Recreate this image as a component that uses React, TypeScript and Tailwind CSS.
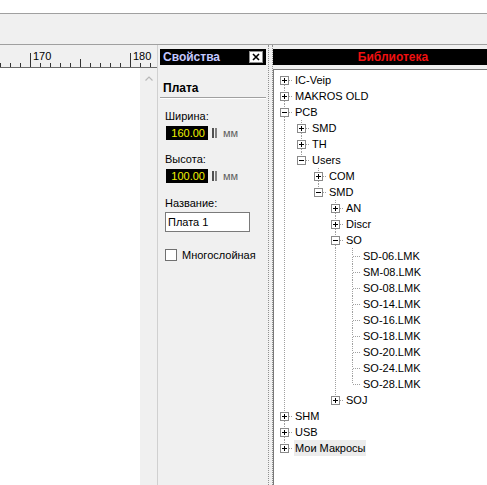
import React from 'react'

type TreeNode = { label: string; exp?: 'plus' | 'minus'; children?: TreeNode[]; selected?: boolean }

const leaves = ['SD-06.LMK', 'SM-08.LMK', 'SO-08.LMK', 'SO-14.LMK', 'SO-16.LMK', 'SO-18.LMK', 'SO-20.LMK', 'SO-24.LMK', 'SO-28.LMK']

const tree: TreeNode[] = [
  { label: 'IC-Veip', exp: 'plus' },
  { label: 'MAKROS OLD', exp: 'plus' },
  {
    label: 'PCB',
    exp: 'minus',
    children: [
      { label: 'SMD', exp: 'plus' },
      { label: 'TH', exp: 'plus' },
      {
        label: 'Users',
        exp: 'minus',
        children: [
          { label: 'COM', exp: 'plus' },
          {
            label: 'SMD',
            exp: 'minus',
            children: [
              { label: 'AN', exp: 'plus' },
              { label: 'Discr', exp: 'plus' },
              { label: 'SO', exp: 'minus', children: leaves.map((l) => ({ label: l })) },
              { label: 'SOJ', exp: 'plus' },
            ],
          },
        ],
      },
    ],
  },
  { label: 'SHM', exp: 'plus' },
  { label: 'USB', exp: 'plus' },
  { label: 'Мои Макросы', exp: 'plus', selected: true },
]

type FlatRow = { node: TreeNode; lines: boolean[]; last: boolean; first: boolean }

function flatten(nodes: TreeNode[], lines: boolean[], out: FlatRow[]) {
  nodes.forEach((n, i) => {
    const last = i === nodes.length - 1
    out.push({ node: n, lines, last, first: lines.length === 0 && i === 0 })
    if (n.children) flatten(n.children, [...lines, !last], out)
  })
  return out
}

const dot = { stroke: '#a0a0a0', strokeWidth: 1, strokeDasharray: '1 1' }

function Cell({ vertical }: { vertical: boolean }) {
  return (
    <svg width="17" height="16" className="shrink-0">
      {vertical && <line x1="8.5" y1="0" x2="8.5" y2="16" {...dot} />}
    </svg>
  )
}

function OwnCell({ row }: { row: FlatRow }) {
  const { node, last, first } = row
  return (
    <svg width="17" height="16" className="shrink-0">
      {!first && <line x1="8.5" y1="0" x2="8.5" y2="8" {...dot} />}
      {!last && <line x1="8.5" y1="9" x2="8.5" y2="16" {...dot} />}
      <line x1="9" y1="8.5" x2="17" y2="8.5" {...dot} />
      {node.exp && (
        <g>
          <rect x="4.5" y="4.5" width="8" height="8" fill="#fff" stroke="#8a8a8a" />
          <line x1="6" y1="8.5" x2="11" y2="8.5" stroke="#000" />
          {node.exp === 'plus' && <line x1="8.5" y1="6" x2="8.5" y2="11" stroke="#000" />}
        </g>
      )}
    </svg>
  )
}

function Ruler() {
  const ticks = []
  for (let x = 0; x <= 156; x += 10) {
    const major = x === 30 || x === 130
    const mid = x === 80
    ticks.push(
      <line key={x} x1={x + 0.5} y1={major ? 8 : mid ? 14 : 18} x2={x + 0.5} y2={22} stroke="#333" strokeWidth={1} />
    )
  }
  return (
    <div className="h-[23px] shrink-0 bg-[#f0f0f0] border-b border-[#6a6a6a]">
      <svg width="157" height="22">
        {ticks}
        <text x="33" y="15" fontSize="11" fontFamily="Liberation Sans, Arial, sans-serif" fill="#000">170</text>
        <text x="133" y="15" fontSize="11" fontFamily="Liberation Sans, Arial, sans-serif" fill="#000">180</text>
      </svg>
    </div>
  )
}

function NumField({ value }: { value: string }) {
  return (
    <div className="flex items-center mt-[2px] ml-[1px]">
      <div className="w-[42px] h-[14px] bg-black text-[#f2f200] text-right pr-[3px] leading-[14px]">{value}</div>
      <div className="flex gap-[1px] ml-[4px]">
        <div className="w-[2px] h-[10px] bg-[#505050]" />
        <div className="w-[2px] h-[10px] bg-[#808080]" />
      </div>
      <span className="ml-[6px] text-[#606060]">мм</span>
    </div>
  )
}

function Props() {
  return (
    <div className="w-[111px] shrink-0 bg-[#f0f0f0] border-l border-[#d0d0d0] px-[2px] pt-[4px]">
      <div className="h-[16px] bg-black flex items-center justify-between pl-[3px] pr-[3px]">
        <span className="text-[12px] font-bold text-[#c4c8ff]">Свойства</span>
        <div className="w-[14px] h-[12px] bg-white border border-[#909090] flex items-center justify-center">
          <svg width="8" height="8">
            <path d="M1 1L7 7M7 1L1 7" stroke="#000" strokeWidth="1.6" />
          </svg>
        </div>
      </div>
      <div className="mt-[16px] pl-[3px] h-[14px] leading-[14px] text-[12px] font-bold">Плата</div>
      <div className="mt-[2px] h-[2px] border-t border-[#a0a0a0] border-b border-b-white" />
      <div className="pl-[5px]">
        <div className="mt-[10px] h-[14px] leading-[14px]">Ширина:</div>
        <NumField value="160.00" />
        <div className="mt-[10px] h-[14px] leading-[14px]">Высота:</div>
        <NumField value="100.00" />
        <div className="mt-[12px] h-[14px] leading-[14px]">Название:</div>
        <div className="mt-[2px] w-[85px] h-[20px] bg-white border border-[#7a7a7a] pl-[2px] leading-[18px]">Плата 1</div>
        <div className="mt-[15px] flex items-center">
          <div className="w-[12px] h-[12px] bg-white border border-[#707070]" />
          <span className="ml-[5px]">Многослойная</span>
        </div>
      </div>
    </div>
  )
}

function Library() {
  const rows = flatten(tree, [], [])
  return (
    <div className="w-[240px] shrink-0 bg-[#f0f0f0] pt-[4px] flex flex-col">
      <div className="h-[16px] bg-black flex items-center justify-center">
        <span className="text-[12px] font-bold text-[#f01010]">Библиотека</span>
      </div>
      <div className="mt-[4px] flex-1 bg-white border-t border-l border-[#7a7a7a] pt-[2px] pl-[2px]">
        {rows.map((r, i) => (
          <div key={i} className="flex h-[16px] items-center">
            {r.lines.map((v, j) => (
              <Cell key={j} vertical={v} />
            ))}
            <OwnCell row={r} />
            <span className={`ml-[1px] px-[1px] leading-[16px] whitespace-nowrap ${r.node.selected ? 'bg-[#ececec]' : ''}`}>
              {r.node.label}
            </span>
          </div>
        ))}
      </div>
    </div>
  )
}

export default function App() {
  return (
    <div className="w-[487px] h-[485px] overflow-hidden bg-white flex flex-col font-['Liberation_Sans',Arial,sans-serif] text-[11px] text-black">
      <div className="h-[13px] shrink-0 bg-white" />
      <div className="h-[32px] shrink-0 bg-[#f0f0f0] border-y border-[#a0a0a0]" />
      <div className="flex flex-1 min-h-0">
        <div className="w-[157px] shrink-0 flex flex-col">
          <Ruler />
          <div className="flex flex-1">
            <div className="flex-1 bg-white" />
            <div className="w-[17px] bg-[#f0f0f0] flex justify-center pt-[8px]">
              <svg width="8" height="5">
                <path d="M0.5 4.5L4 1L7.5 4.5" stroke="#b8b8b8" fill="none" strokeWidth="1.2" />
              </svg>
            </div>
          </div>
        </div>
        <Props />
        <div className="w-[5px] shrink-0 bg-[#f0f0f0] border-x border-dotted border-[#909090]" />
        <Library />
      </div>
    </div>
  )
}
